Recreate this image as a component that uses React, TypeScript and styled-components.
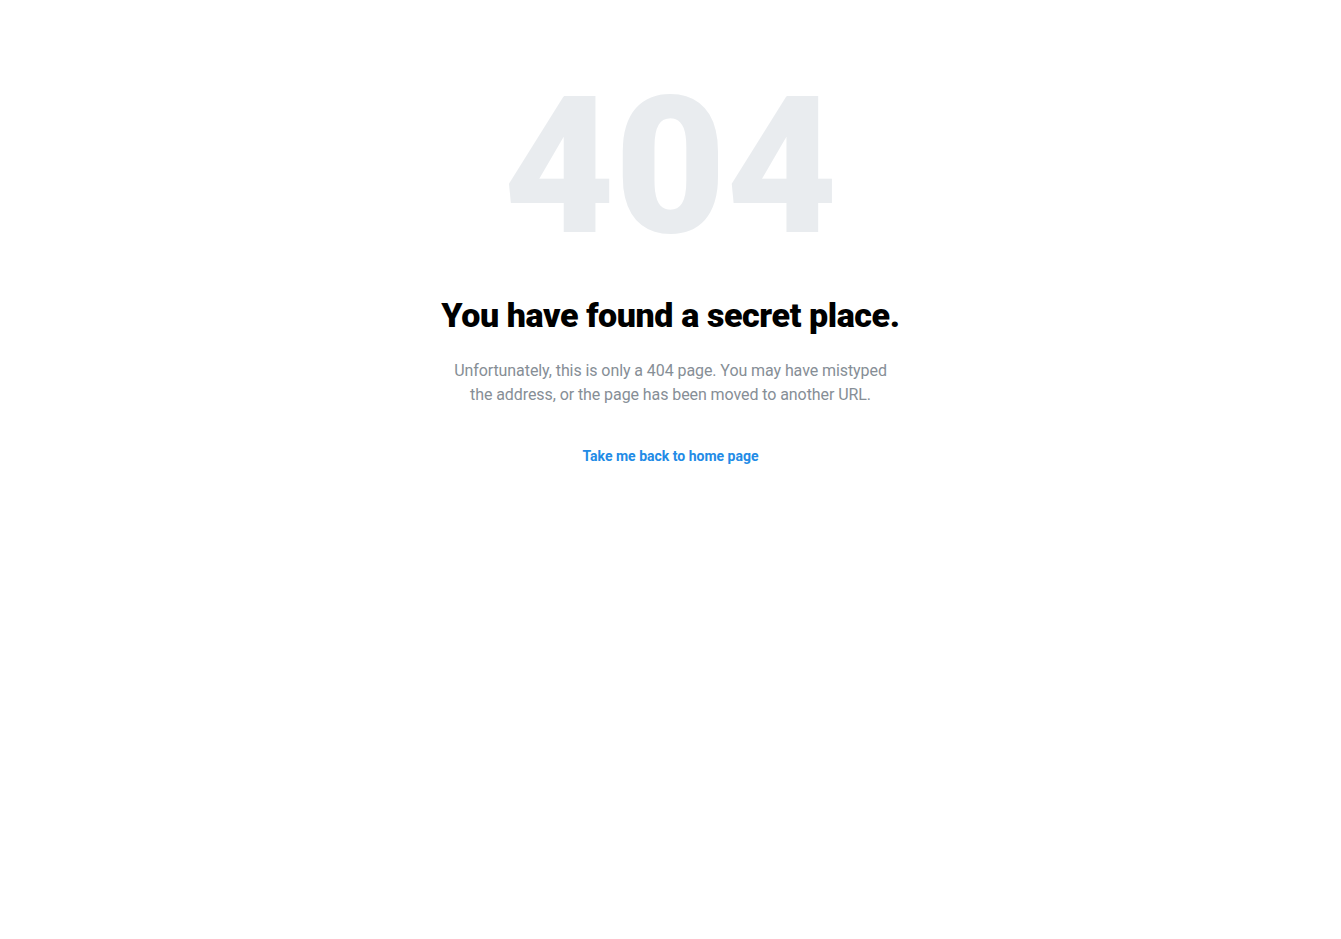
import React from "react";
import styled, { createGlobalStyle } from "styled-components";

const Global = createGlobalStyle`
  html, body { margin: 0; padding: 0; background: #ffffff; }
  body { font-family: Roboto, "Liberation Sans", Arial, sans-serif; -webkit-font-smoothing: antialiased; }
`;

const Root = styled.main`
  display: flex;
  flex-direction: column;
  align-items: center;
  padding: 71px 16px 80px;
`;

const Label = styled.div`
  font-weight: 900;
  font-size: 192px;
  line-height: 1;
  color: #e9ecef;
  text-align: center;
`;

const Title = styled.h1`
  margin: 31px 0 0;
  font-weight: 900;
  font-size: 34px;
  line-height: 42px;
  letter-spacing: -0.4px;
  color: #000000;
  text-align: center;
`;

const Description = styled.p`
  max-width: 440px;
  margin: 23px auto 0;
  font-size: 16px;
  line-height: 24px;
  letter-spacing: -0.08px;
  color: #868e96;
  text-align: center;
`;

const LinkButton = styled.a`
  margin-top: 31px;
  display: inline-flex;
  align-items: center;
  height: 36px;
  padding: 0 18px;
  border-radius: 4px;
  font-size: 14px;
  font-weight: 700;
  color: #228be6;
  text-decoration: none;
  cursor: pointer;
  &:hover { background: #e7f5ff; }
`;

export default function App() {
  return (
    <>
      <Global />
      <Root>
        <Label>404</Label>
        <Title>You have found a secret place.</Title>
        <Description>
          Unfortunately, this is only a 404 page. You may have mistyped the address, or the page has
          been moved to another URL.
        </Description>
        <LinkButton href="#">Take me back to home page</LinkButton>
      </Root>
    </>
  );
}
